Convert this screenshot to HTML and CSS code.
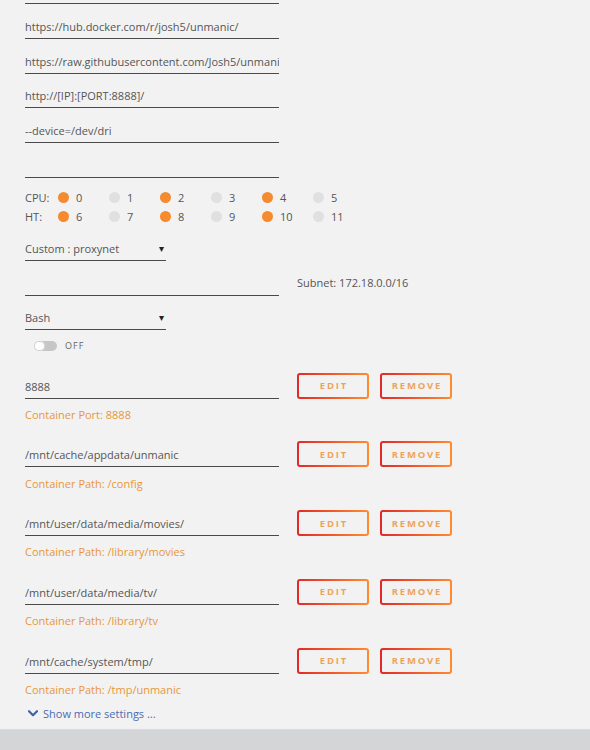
FILE: index.html
```html
<!DOCTYPE html>
<html lang="en">
<head>
<meta charset="utf-8">
<title>Update Container</title>
<link rel="stylesheet" href="styles.css">
</head>
<body>
<main class="form">
  <div class="field field-top"></div>
  <div class="field"><span class="value">https://hub.docker.com/r/josh5/unmanic/</span></div>
  <div class="field"><span class="value">https://raw.githubusercontent.com/Josh5/unmanic/master/icon.png</span></div>
  <div class="field"><span class="value">http://[IP]:[PORT:8888]/</span></div>
  <div class="field"><span class="value">--device=/dev/dri</span></div>
  <div class="field"></div>

  <div class="cpus">
    <div class="cpu-row">
      <span class="cpu-label">CPU:</span>
      <span class="cpu"><i class="dot on"></i>0</span>
      <span class="cpu"><i class="dot"></i>1</span>
      <span class="cpu"><i class="dot on"></i>2</span>
      <span class="cpu"><i class="dot"></i>3</span>
      <span class="cpu"><i class="dot on"></i>4</span>
      <span class="cpu"><i class="dot"></i>5</span>
    </div>
    <div class="cpu-row">
      <span class="cpu-label">HT:</span>
      <span class="cpu"><i class="dot on"></i>6</span>
      <span class="cpu"><i class="dot"></i>7</span>
      <span class="cpu"><i class="dot on"></i>8</span>
      <span class="cpu"><i class="dot"></i>9</span>
      <span class="cpu"><i class="dot on"></i>10</span>
      <span class="cpu"><i class="dot"></i>11</span>
    </div>
  </div>

  <div class="select select-network"><span class="value">Custom : proxynet</span><span class="caret">&#9662;</span></div>

  <div class="line">
    <div class="field"></div>
    <span class="note">Subnet: 172.18.0.0/16</span>
  </div>

  <div class="select select-shell"><span class="value">Bash</span><span class="caret">&#9662;</span></div>

  <div class="switch-row">
    <span class="switch"><span class="knob"></span></span>
    <span class="switch-text">OFF</span>
  </div>

  <div class="mapping">
    <div class="line">
      <div class="field"><span class="value">8888</span></div>
      <button class="btn">EDIT</button>
      <button class="btn">REMOVE</button>
    </div>
    <div class="target">Container Port: 8888</div>
  </div>

  <div class="mapping">
    <div class="line">
      <div class="field"><span class="value">/mnt/cache/appdata/unmanic</span></div>
      <button class="btn">EDIT</button>
      <button class="btn">REMOVE</button>
    </div>
    <div class="target">Container Path: /config</div>
  </div>

  <div class="mapping">
    <div class="line">
      <div class="field"><span class="value">/mnt/user/data/media/movies/</span></div>
      <button class="btn">EDIT</button>
      <button class="btn">REMOVE</button>
    </div>
    <div class="target">Container Path: /library/movies</div>
  </div>

  <div class="mapping">
    <div class="line">
      <div class="field"><span class="value">/mnt/user/data/media/tv/</span></div>
      <button class="btn">EDIT</button>
      <button class="btn">REMOVE</button>
    </div>
    <div class="target">Container Path: /library/tv</div>
  </div>

  <div class="mapping">
    <div class="line">
      <div class="field"><span class="value">/mnt/cache/system/tmp/</span></div>
      <button class="btn">EDIT</button>
      <button class="btn">REMOVE</button>
    </div>
    <div class="target">Container Path: /tmp/unmanic</div>
  </div>

  <a class="more" href="#">
    <svg class="chevron" width="10" height="7" viewBox="0 0 10 7"><path d="M1 1.2 L5 5.2 L9 1.2" fill="none" stroke="currentColor" stroke-width="2.2" stroke-linecap="round" stroke-linejoin="round"/></svg>
    <span>Show more settings ...</span>
  </a>
</main>
<footer class="footer"></footer>
</body>
</html>
```

FILE: styles.css
```css
html, body {
  margin: 0;
  padding: 0;
}

body {
  background: #f2f2f2;
  font-family: "Open Sans", "Noto Sans", sans-serif;
  font-size: 11px;
  color: #555;
  overflow: hidden;
}

.form {
  padding-left: 25px;
  display: flex;
  flex-direction: column;
  align-items: flex-start;
}

/* text inputs: value over a dark underline */
.field {
  width: 254px;
  height: 34.8px;
  box-sizing: border-box;
  border-bottom: 1px solid #4a4a4a;
  display: flex;
  align-items: flex-end;
  padding-bottom: 4px;
  line-height: 15px;
  overflow: hidden;
  white-space: nowrap;
}

.field-top {
  height: 4px;
  padding: 0;
}

.value {
  white-space: nowrap;
}

/* cpu pinning grid */
.cpus {
  margin-top: 10px;
}

.cpu-row {
  display: flex;
  align-items: center;
  height: 19px;
}

.cpu-label {
  width: 33px;
}

.cpu {
  width: 51px;
  display: flex;
  align-items: center;
  gap: 7px;
}

.dot {
  width: 11px;
  height: 11px;
  border-radius: 50%;
  background: #e0e0e0;
  flex: none;
}

.dot.on {
  background: #f58a2e;
}

/* dropdowns */
.select {
  width: 141px;
  box-sizing: border-box;
  border-bottom: 1px solid #4a4a4a;
  display: flex;
  align-items: flex-end;
  justify-content: space-between;
  padding-bottom: 4px;
  line-height: 15px;
}

.select-network {
  margin-top: 10px;
  height: 25px;
}

.select-shell {
  height: 34px;
}

.caret {
  font-size: 10px;
  color: #222;
  padding-right: 2px;
}

/* field with controls beside it */
.line {
  display: flex;
  align-items: flex-end;
}

.line .field + .note,
.line .field + .btn {
  margin-left: 18px;
}

.note {
  line-height: 15px;
  padding-bottom: 6px;
}

/* toggle */
.switch-row {
  display: flex;
  align-items: center;
  margin-top: 11px;
  margin-left: 9px;
  height: 10px;
}

.switch {
  width: 23px;
  height: 10px;
  border-radius: 5px;
  background: #c6c6c6;
  position: relative;
}

.knob {
  position: absolute;
  left: 0;
  top: 0;
  width: 11px;
  height: 10px;
  border-radius: 5px;
  background: #fff;
  box-shadow: 0 0 0 1px #d0d0d0 inset;
}

.switch-text {
  margin-left: 8px;
  font-size: 9px;
  letter-spacing: 1px;
  color: #666;
}

/* port and path mappings */
.mapping {
  margin-top: 13px;
}

.mapping + .mapping {
  margin-top: 10.8px;
}

.btn {
  width: 72px;
  height: 26px;
  margin: 0;
  padding: 0;
  border: 2px solid transparent;
  border-radius: 3px;
  background:
    linear-gradient(#f2f2f2, #f2f2f2) padding-box,
    linear-gradient(90deg, #e22828, #ff8c2f) border-box;
  color: #efa35a;
  font-family: "Open Sans", "Noto Sans", sans-serif;
  font-size: 9.5px;
  font-weight: 700;
  letter-spacing: 1.8px;
  text-indent: 1.8px;
  cursor: pointer;
}

.btn + .btn {
  margin-left: 11px;
}

.target {
  margin-top: 8.2px;
  line-height: 15px;
  color: #e8963c;
}

/* expander link */
.more {
  margin-top: 9.5px;
  margin-left: 3px;
  display: flex;
  align-items: center;
  gap: 5px;
  line-height: 15px;
  color: #4a6cb3;
  text-decoration: none;
}

.chevron {
  color: #3f63ad;
}

.footer {
  margin-top: 8px;
  height: 60px;
  background: #d4d5d7;
  border-top: 1px solid #dcdcdd;
}
```
